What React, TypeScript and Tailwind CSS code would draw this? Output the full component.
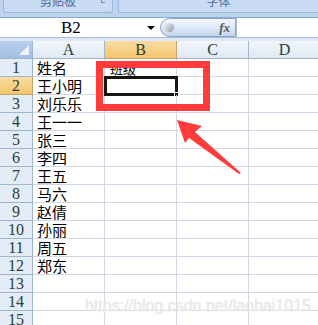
import React from 'react'

const NAMES = ['姓名', '王小明', '刘乐乐', '王一一', '张三', '李四', '王五', '马六', '赵倩', '孙丽', '周五', '郑东', '', '', '']
const COLS = ['A', 'B', 'C', 'D']

const serif = { fontFamily: '"Liberation Serif", "DejaVu Serif", serif' }
const cjk = { fontFamily: '"Noto Sans CJK SC", "Noto Sans", sans-serif' }

function Ribbon() {
  return (
    <div className="h-[18px] bg-[#bcd3ee] border-b border-[#8aa9d3] flex items-start gap-[5px] pl-[3px]">
      <div className="w-[110px] h-[13px] rounded-b-[3px] border border-t-0 border-[#98b6de] bg-[#c8dbf2] relative overflow-hidden flex justify-center">
        <span className="text-[12px] leading-[12px] text-[#4a6c9f] -mt-[5px]" style={cjk}>剪贴板</span>
        <span className="absolute right-[7px] top-0 w-[4px] h-[3px] border-l border-b border-[#6f8fbf]" />
      </div>
      <div className="flex-1 h-[13px] rounded-bl-[3px] border border-t-0 border-r-0 border-[#98b6de] bg-[#c8dbf2] overflow-hidden flex justify-center">
        <span className="text-[12px] leading-[12px] text-[#4a6c9f] -mt-[5px]" style={cjk}>字体</span>
      </div>
    </div>
  )
}

function FormulaBar() {
  return (
    <div className="h-[20px] flex bg-white border-b border-[#a7bcd9]">
      <div className="w-[160px] relative">
        <span className="absolute left-[61px] top-[0px] text-[17px] leading-[19px] text-black" style={serif}>B2</span>
        <span className="absolute left-[147px] top-[8px] w-0 h-0 border-l-[4px] border-r-[4px] border-t-[4px] border-l-transparent border-r-transparent border-t-black" />
      </div>
      <div className="w-[76px] h-[19px] rounded-l-full border border-[#8aa4c8] bg-gradient-to-b from-[#f4f8fd] via-[#dde8f6] to-[#c3d5ee] flex items-center justify-between pl-[4px] pr-[5px]">
        <span className="w-[9px] h-[9px] rounded-full bg-gradient-to-br from-[#f2f2f2] to-[#8e9aa8]" />
        <span className="text-[13px] italic font-bold text-[#5a5a5a] leading-none" style={serif}>fx</span>
      </div>
      <div className="flex-1 border-l border-[#a7bcd9] bg-white" />
    </div>
  )
}

export default function App() {
  return (
    <div className="w-[318px] h-[325px] overflow-hidden bg-white relative">
      <Ribbon />
      <FormulaBar />
      <div className="h-[3px] bg-[#dfe8f4]" />

      <div className="grid grid-cols-[33px_72px_72px_72px_72px] w-[321px]">
        {/* header row */}
        <div className="h-[18px] border-r border-b border-[#9eb6ce] bg-gradient-to-b from-[#b9cfee] to-[#a4bee3] relative">
          <span className="absolute right-[3px] bottom-[3px] w-0 h-0 border-b-[10px] border-l-[10px] border-b-[#eef3fa] border-l-transparent" />
        </div>
        {COLS.map((c) => (
          <div
            key={c}
            className={`h-[18px] border-r border-b flex items-center justify-center text-[16px] leading-[17px] ${
              c === 'B'
                ? 'bg-gradient-to-b from-[#f9dca3] to-[#f2c56a] border-[#c2a467] text-[#2f3b2e]'
                : 'bg-gradient-to-b from-[#f2f6fb] to-[#dfe8f4] border-[#9eb6ce] text-[#27413e]'
            }`}
            style={serif}
          >
            {c}
          </div>
        ))}

        {NAMES.map((name, i) => {
          const row = i + 1
          return (
            <React.Fragment key={row}>
              <div
                className={`h-[18px] border-r border-b flex items-center justify-center text-[16px] leading-[17px] ${
                  row === 2
                    ? 'bg-gradient-to-b from-[#f9dca3] to-[#f2c56a] border-[#c2a467] text-[#2f3b2e]'
                    : 'bg-[#e4ecf7] border-[#9eb6ce] text-[#27413e]'
                }`}
                style={serif}
              >
                {row}
              </div>
              <div className="h-[18px] border-r border-b border-[#d0d7e5] pl-[4px] flex items-center overflow-hidden">
                <span className="text-[15px] leading-[17px] text-black" style={cjk}>{name}</span>
              </div>
              <div className="h-[18px] border-r border-b border-[#d0d7e5] relative">
                {row === 1 && (
                  <span className="absolute left-[5px] bottom-[0px] text-[13px] leading-[14px] text-black" style={cjk}>班级</span>
                )}
                {row === 2 && (
                  <div className="absolute -left-[1px] -top-[1px] w-[74px] h-[20px] border-[3px] border-[#181410]">
                    <span className="absolute -right-[4px] -bottom-[4px] w-[5px] h-[5px] bg-[#181410] border border-white" />
                  </div>
                )}
              </div>
              <div className="h-[18px] border-r border-b border-[#d0d7e5]" />
              <div className="h-[18px] border-r border-b border-[#d0d7e5]" />
            </React.Fragment>
          )
        })}
      </div>

      {/* annotation: red box */}
      <div className="absolute left-[96px] top-[61px] w-[114px] h-[50px] border-[7px] border-[#ff3b3b]" />

      {/* annotation: arrow */}
      <svg className="absolute left-0 top-0" width="318" height="325" viewBox="0 0 318 325">
        <polygon points="177,120 202,126 195,132 241,173 239,174 189,138 185,143" fill="#ff3b3b" />
      </svg>

      {/* watermark */}
      <div
        className="absolute left-[85px] top-[294px] text-[16px] text-[#ececec]"
        style={{ fontFamily: '"Liberation Sans", Arial, sans-serif', textShadow: '0 0 1px #d6d6d6' }}
      >
        https://blog.csdn.net/laobai1015
      </div>
    </div>
  )
}
